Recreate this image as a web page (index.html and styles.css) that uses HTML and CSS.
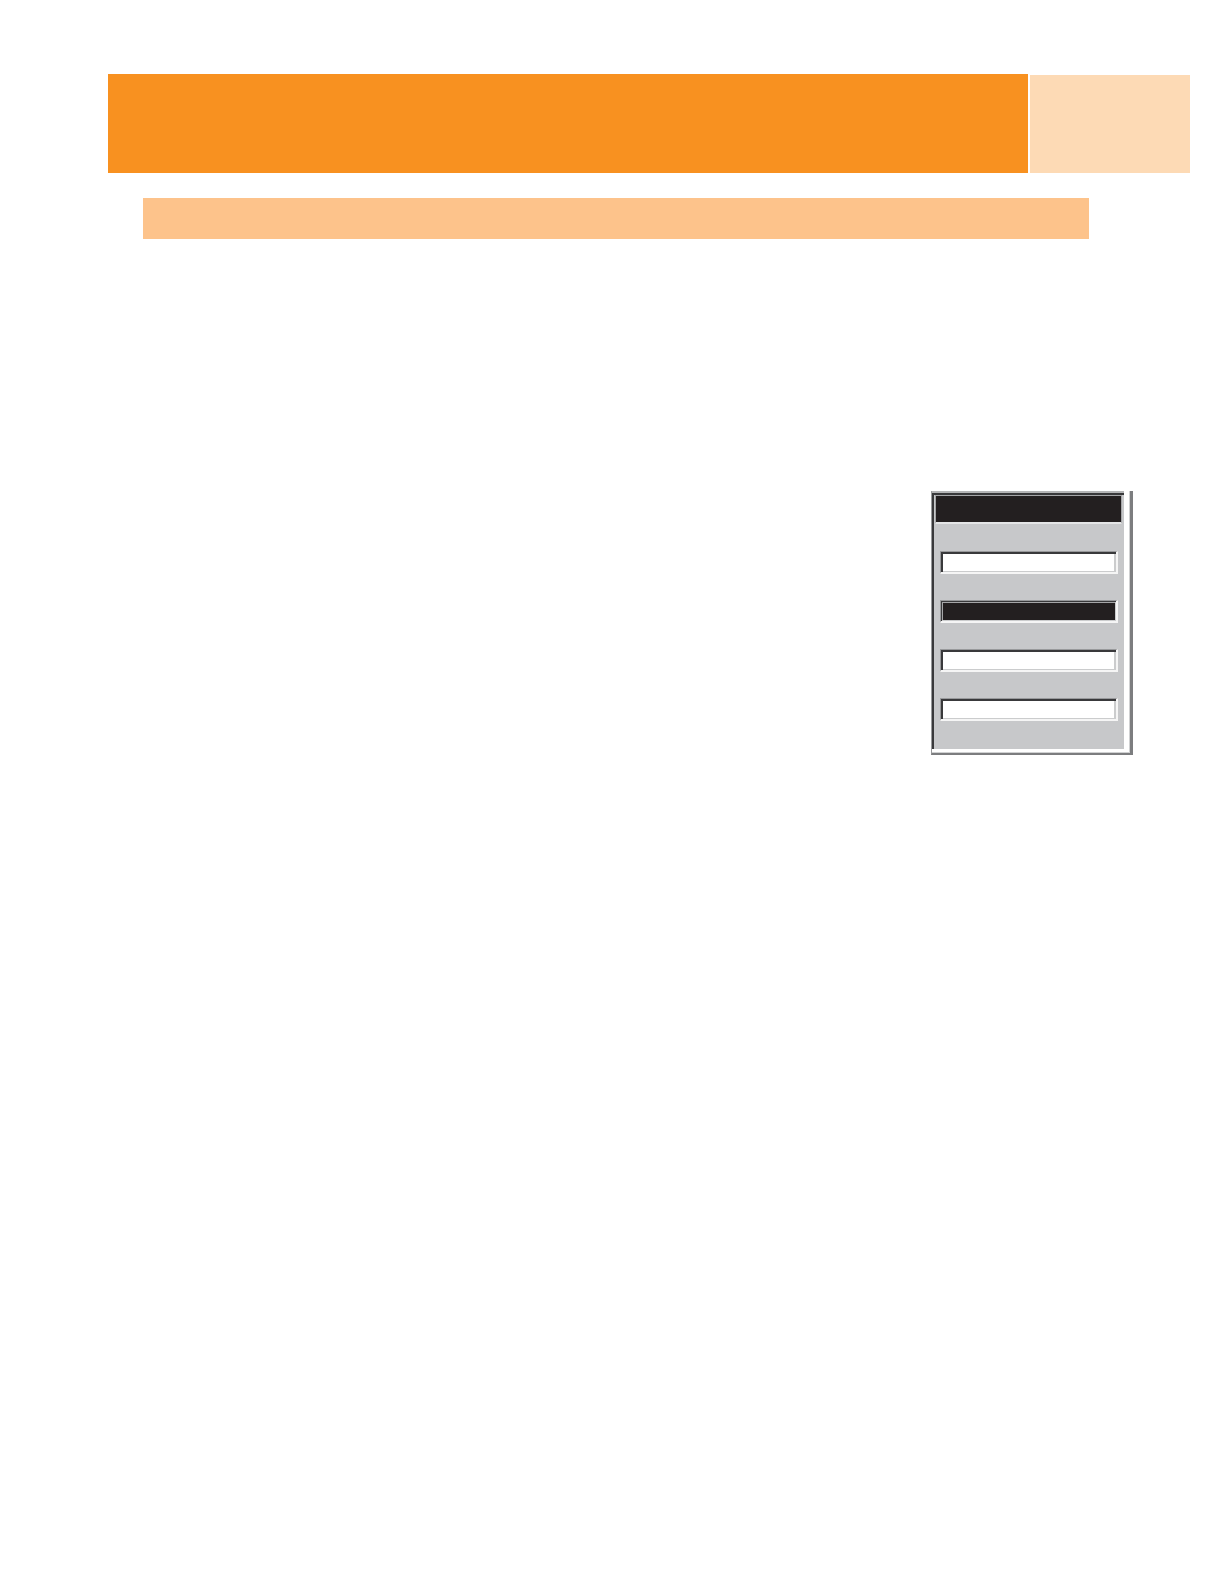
FILE: index.html
```html
<!DOCTYPE html>
<html lang="en">
<head>
    <meta charset="UTF-8">
    <meta name="viewport" content="width=device-width, initial-scale=1.0">
    <title>Menu</title>
    <link rel="stylesheet" href="styles.css">
</head>
<body>
    <header class="header">
        <div class="header-title"></div>
        <div class="header-tab"></div>
    </header>
    <main class="content">
        <div class="section-bar"></div>
        <form class="panel">
            <div class="panel-body">
                <div class="panel-title"></div>
                <div class="fields">
                    <input class="field" type="text" aria-label="Field 1">
                    <input class="field selected" type="text" aria-label="Field 2">
                    <input class="field" type="text" aria-label="Field 3">
                    <input class="field" type="text" aria-label="Field 4">
                </div>
            </div>
        </form>
    </main>
</body>
</html>
```

FILE: styles.css
```css
* {
    box-sizing: border-box;
}
body {
    font-family: "Liberation Sans", Arial, sans-serif;
    margin: 0;
    padding: 74px 34px 74px 108px;
    background-color: #ffffff;
}
.header {
    display: flex;
    align-items: flex-end;
    gap: 2px;
}
.header-title {
    flex: 1;
    height: 99px;
    background-color: #f89120;
}
.header-tab {
    width: 160px;
    height: 98px;
    background-color: #fddab5;
}
.content {
    display: flex;
    flex-direction: column;
}
.section-bar {
    height: 41px;
    margin: 25px 101px 0 35px;
    background-color: #fdc38b;
}

/* Raised outer frame of the panel */
.panel {
    align-self: flex-end;
    width: 202px;
    margin: 252px 57px 0 0;
    padding: 0 1px 1px 0;
    border-style: solid;
    border-width: 0 3px 2px 1px;
    border-color: #7c7d7f #7c7d7f #7c7d7f #98999b;
    background-color: #d0d1d2;
}
/* Sunken inner area */
.panel-body {
    padding: 4px 2px 28px 3px;
    border-right: 5px solid #ffffff;
    border-bottom: 3px solid #ffffff;
    background-color: #c7c8ca;
    box-shadow: inset 0 2px #b4b5b6, inset 2px 4px #39393b;
}
.panel-title {
    height: 29px;
    border: 1px solid #a5a6a8;
    border-bottom: 2px solid #e4e5e6;
    background-color: #231f20;
}
.fields {
    display: flex;
    flex-direction: column;
    gap: 26px;
    padding: 27px 4px 0 5px;
}
.field {
    width: 100%;
    height: 23px;
    padding: 0 4px;
    font-family: inherit;
    font-size: 12px;
    border-style: solid;
    border-width: 1px 2px 2px 1px;
    border-color: #98999b #f5f5f5 #f5f5f5 #98999b;
    border-radius: 0;
    outline: none;
    background-color: #ffffff;
    box-shadow: inset 2px 2px #39393b, inset -2px -1px #cbcccd;
}
.field.selected {
    color: #ffffff;
    background-color: #231f20;
    box-shadow: inset 1px 1px #39393b, inset -1px -1px #cbcccd, inset 2px 2px #a5a6a8;
}
```
